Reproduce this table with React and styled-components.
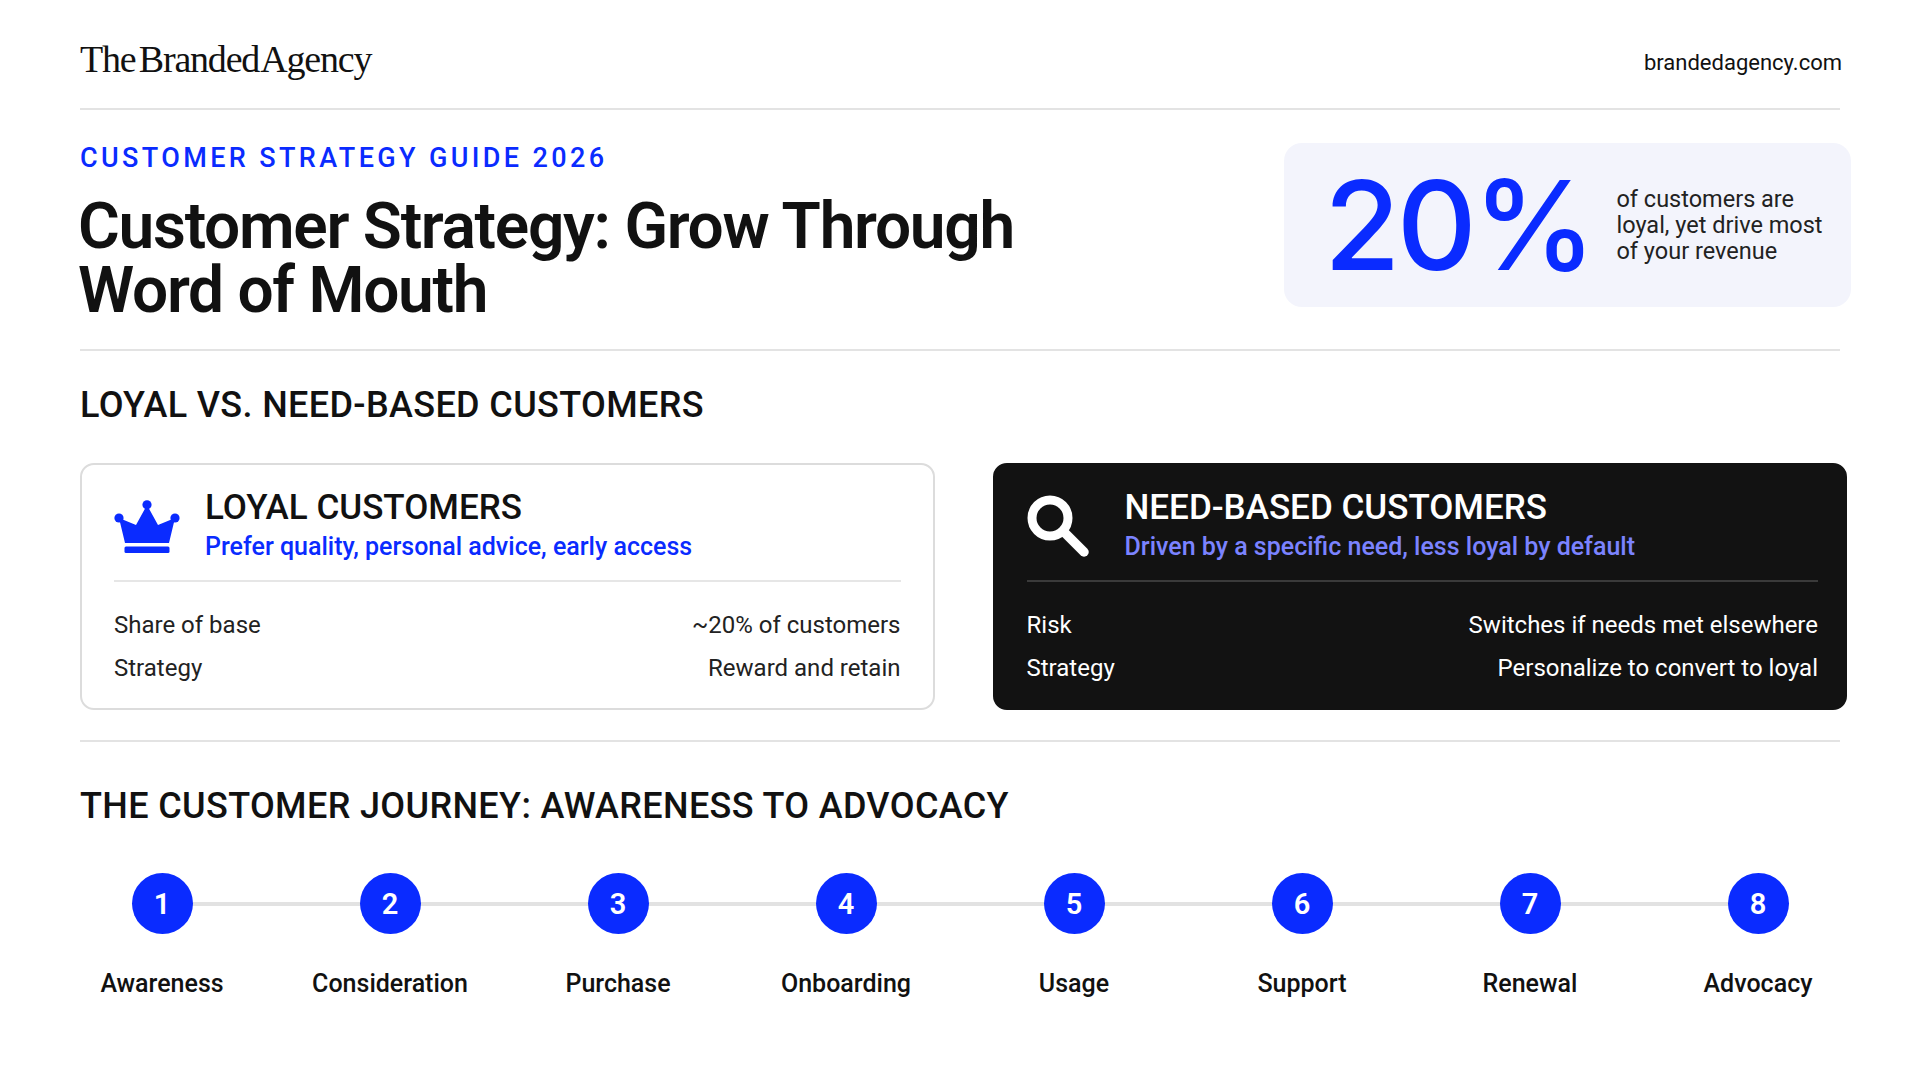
import React from 'react'
import styled, { createGlobalStyle } from 'styled-components'

const BLUE = '#0a2bff'

const GlobalStyle = createGlobalStyle`
  * { box-sizing: border-box; }
  html, body { margin: 0; padding: 0; background: #fff; }
  body { font-family: Roboto, 'Liberation Sans', Arial, sans-serif; color: #111; }
`

const steps = ['Awareness', 'Consideration', 'Purchase', 'Onboarding', 'Usage', 'Support', 'Renewal', 'Advocacy']

const CrownIcon = () => (
  <svg width="66" height="53" viewBox="0 0 66 53">
    <circle cx="5" cy="18" r="4.6" fill={BLUE} />
    <circle cx="33" cy="4.8" r="4.6" fill={BLUE} />
    <circle cx="61" cy="18" r="4.6" fill={BLUE} />
    <polygon points="5,18 22,25 33,5 44,25 61,18 55,43 11,43" fill={BLUE} />
    <rect x="10.5" y="46.5" width="45" height="6.5" rx="1.5" fill={BLUE} />
  </svg>
)

const SearchIcon = () => (
  <svg width="62" height="62" viewBox="0 0 62 62">
    <circle cx="23" cy="23" r="18" fill="none" stroke="#fff" strokeWidth="9" />
    <line x1="37" y1="37" x2="57" y2="57" stroke="#fff" strokeWidth="9.5" strokeLinecap="round" />
  </svg>
)

const App = () => {
  return (
    <>
      <GlobalStyle />
      <Page>
        <Header>
          <Logo>The Branded Agency</Logo>
          <Url>brandedagency.com</Url>
        </Header>
        <Rule />

        <Hero>
          <HeroText>
            <Eyebrow>CUSTOMER STRATEGY GUIDE 2026</Eyebrow>
            <Title>Customer Strategy: Grow Through<br />Word of Mouth</Title>
          </HeroText>
          <StatBox>
            <StatNumber>20%</StatNumber>
            <StatText>of customers are<br />loyal, yet drive most<br />of your revenue</StatText>
          </StatBox>
        </Hero>
        <Rule />

        <Section>
          <SectionTitle>LOYAL VS. NEED-BASED CUSTOMERS</SectionTitle>
          <Cards>
            <Card>
              <CardHead $gap={25}>
                <IconWrap><CrownIcon /></IconWrap>
                <div>
                  <CardTitle>LOYAL CUSTOMERS</CardTitle>
                  <CardSub>Prefer quality, personal advice, early access</CardSub>
                </div>
              </CardHead>
              <CardRule />
              <Rows>
                <Row><span>Share of base</span><span>~20% of customers</span></Row>
                <Row><span>Strategy</span><span>Reward and retain</span></Row>
              </Rows>
            </Card>
            <Card $dark>
              <CardHead $gap={32}>
                <IconWrap><SearchIcon /></IconWrap>
                <div>
                  <CardTitle $dark>NEED-BASED CUSTOMERS</CardTitle>
                  <CardSub $dark>Driven by a specific need, less loyal by default</CardSub>
                </div>
              </CardHead>
              <CardRule $dark />
              <Rows>
                <Row $dark><span>Risk</span><span>Switches if needs met elsewhere</span></Row>
                <Row $dark><span>Strategy</span><span>Personalize to convert to loyal</span></Row>
              </Rows>
            </Card>
          </Cards>
        </Section>
        <Rule />

        <Section $journey>
          <SectionTitle>THE CUSTOMER JOURNEY: AWARENESS TO ADVOCACY</SectionTitle>
          <Journey>
            {steps.map((label, i) => (
              <Step key={label}>
                <StepDot>{i + 1}</StepDot>
                <StepLabel>{label}</StepLabel>
              </Step>
            ))}
          </Journey>
        </Section>
      </Page>
    </>
  )
}

export default App

const Page = styled.main`
  width: 1920px;
  height: 1080px;
  padding: 0 80px;
  background: #fff;
  overflow: hidden;
`

const Header = styled.header`
  height: 108px;
  padding-top: 16px;
  display: flex;
  align-items: center;
  justify-content: space-between;
`

const Logo = styled.div`
  font-family: 'Liberation Serif', 'DejaVu Serif', serif;
  font-size: 38px;
  letter-spacing: -1.2px;
  word-spacing: -5px;
  color: #111;
  margin-top: -6px;
`

const Url = styled.div`
  font-size: 22px;
  color: #111;
  margin-right: -2px;
`

const Rule = styled.hr`
  margin: 0;
  border: 0;
  height: 2px;
  background: #e3e3e3;
`

const Hero = styled.section`
  height: 239px;
  padding-top: 33px;
  display: flex;
  justify-content: space-between;
  align-items: flex-start;
`

const HeroText = styled.div`
  padding-top: 2px;
`

const Eyebrow = styled.div`
  font-size: 27px;
  line-height: 26px;
  font-weight: 500;
  letter-spacing: 0.125em;
  color: ${BLUE};
`

const Title = styled.h1`
  margin: 24px 0 0 -2px;
  font-size: 64px;
  line-height: 64px;
  font-weight: 600;
  letter-spacing: -0.02em;
  color: #111;
`

const StatBox = styled.div`
  width: 567px;
  height: 164px;
  margin-right: -11px;
  border-radius: 18px;
  background: #f3f4fc;
  display: flex;
  align-items: center;
  padding-left: 40px;
  gap: 24px;
`

const StatNumber = styled.div`
  font-family: Inter, Roboto, sans-serif;
  font-size: 124px;
  line-height: 1;
  font-weight: 500;
  letter-spacing: -0.03em;
  color: ${BLUE};
`

const StatText = styled.div`
  font-size: 23.5px;
  line-height: 26px;
  color: #222;
`

const Section = styled.section`
  padding-top: ${p => (p.$journey ? '48px' : '38px')};
  padding-bottom: 30px;
`

const SectionTitle = styled.h2`
  margin: 0;
  font-size: 36px;
  line-height: 32px;
  font-weight: 500;
  letter-spacing: 0.01em;
  color: #111;
`

const Cards = styled.div`
  margin-top: 42px;
  margin-right: -7px;
  display: grid;
  grid-template-columns: 1fr 1fr;
  gap: 58px;
`

const Card = styled.div`
  height: 247px;
  border-radius: 14px;
  padding: 24px ${p => (p.$dark ? '27px' : '32px')} 0 32px;
  background: ${p => (p.$dark ? '#121212' : '#fff')};
  border: 2px solid ${p => (p.$dark ? '#121212' : '#dcdcdc')};
`

const CardHead = styled.div`
  display: flex;
  align-items: center;
  gap: ${p => p.$gap}px;
`

const IconWrap = styled.div`
  width: 66px;
  flex: none;
  display: flex;
  justify-content: flex-start;
`

const CardTitle = styled.div`
  font-size: 35px;
  line-height: 38px;
  font-weight: 500;
  color: ${p => (p.$dark ? '#fff' : '#111')};
`

const CardSub = styled.div`
  margin-top: 4px;
  font-size: 25px;
  line-height: 32px;
  font-weight: 500;
  color: ${p => (p.$dark ? '#7b83ff' : BLUE)};
`

const CardRule = styled.div`
  height: 2px;
  margin-top: 17px;
  background: ${p => (p.$dark ? '#3a3a3a' : '#e6e6e6')};
`

const Rows = styled.div`
  padding-top: 29px;
  display: flex;
  flex-direction: column;
  gap: 14px;
`

const Row = styled.div`
  display: flex;
  justify-content: space-between;
  font-size: 24px;
  line-height: 29px;
  color: ${p => (p.$dark ? '#fff' : '#222')};
`

const Journey = styled.div`
  position: relative;
  margin-top: 51px;
  display: flex;
  justify-content: space-between;

  &::before {
    content: '';
    position: absolute;
    left: 82px;
    right: 82px;
    top: 29px;
    height: 4px;
    background: #e2e2e2;
  }
`

const Step = styled.div`
  position: relative;
  width: 164px;
  display: flex;
  flex-direction: column;
  align-items: center;
`

const StepDot = styled.div`
  width: 61px;
  height: 61px;
  border-radius: 50%;
  background: ${BLUE};
  color: #fff;
  display: flex;
  align-items: center;
  justify-content: center;
  font-size: 29px;
  font-weight: 600;
`

const StepLabel = styled.div`
  margin-top: 36px;
  font-size: 25px;
  line-height: 28px;
  font-weight: 500;
  color: #111;
  white-space: nowrap;
`
